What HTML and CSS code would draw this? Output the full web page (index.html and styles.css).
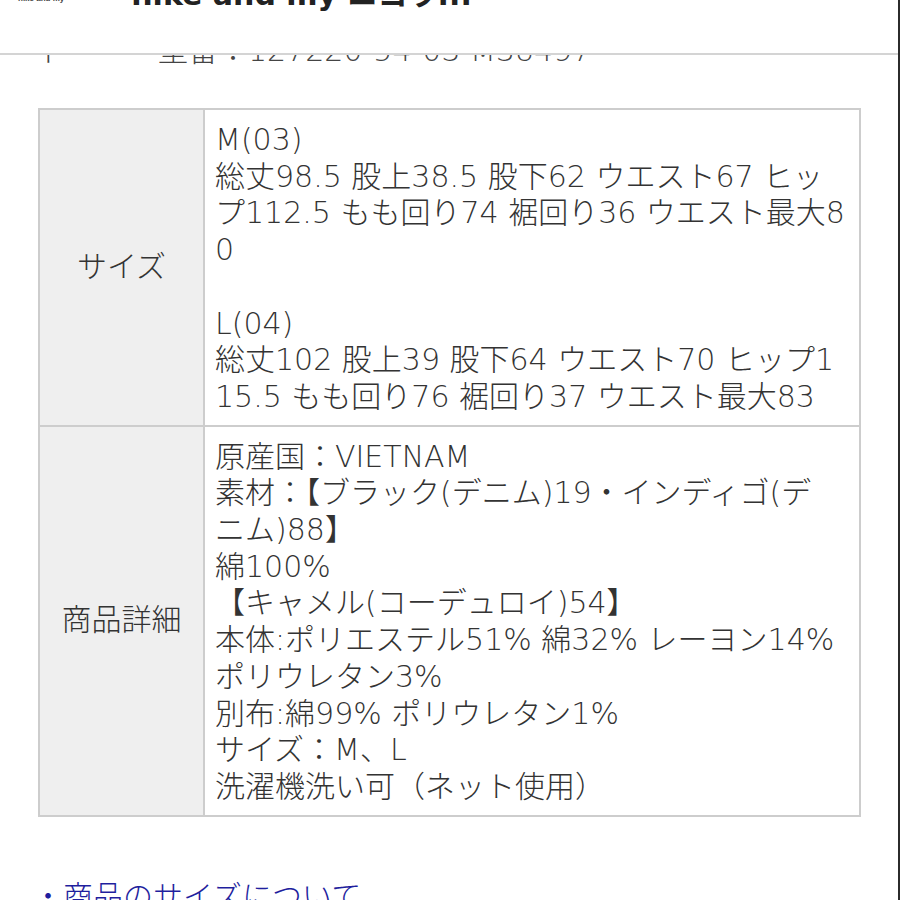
FILE: index.html
```html
<!DOCTYPE html>
<html lang="ja">
<head>
<meta charset="utf-8">
<link rel="stylesheet" href="styles.css">
</head>
<body>
<div class="page">
  <header class="header">
    <span class="logo">nike and my</span>
    <span class="title">nike and my ニコラ...</span>
  </header>
  <main class="content">
    <p class="code"><span class="code-key">ド</span><span>型番：127220-54-03 M38497</span></p>
    <table class="spec">
      <tr>
        <th>サイズ</th>
        <td>
          <span class="ln">M(03)</span>
          <span class="ln">総丈98.5 股上38.5 股下62 ウエスト67 ヒッ</span>
          <span class="ln">プ112.5 もも回り74 裾回り36 ウエスト最大8</span>
          <span class="ln">0</span>
          <span class="ln">&nbsp;</span>
          <span class="ln">L(04)</span>
          <span class="ln">総丈102 股上39 股下64 ウエスト70 ヒップ1</span>
          <span class="ln">15.5 もも回り76 裾回り37 ウエスト最大83</span>
        </td>
      </tr>
      <tr>
        <th>商品詳細</th>
        <td>
          <span class="ln">原産国：VIETNAM</span>
          <span class="ln">素材：【ブラック(デニム)19・インディゴ(デ</span>
          <span class="ln">ニム)88】</span>
          <span class="ln">綿100%</span>
          <span class="ln">【キャメル(コーデュロイ)54】</span>
          <span class="ln">本体:ポリエステル51% 綿32% レーヨン14%</span>
          <span class="ln">ポリウレタン3%</span>
          <span class="ln">別布:綿99% ポリウレタン1%</span>
          <span class="ln">サイズ：M、L</span>
          <span class="ln">洗濯機洗い可（ネット使用）</span>
        </td>
      </tr>
    </table>
    <p class="link">・商品のサイズについて</p>
  </main>
</div>
</body>
</html>
```
FILE: styles.css
```css
html, body {
  margin: 0;
  padding: 0;
  background: #fff;
}
body {
  font-family: "DejaVu Sans", "Noto Sans CJK JP", sans-serif;
  font-weight: 300;
  color: #333;
}
.page {
  position: relative;
  width: 898px;
  height: 900px;
  overflow: hidden;
  border-right: 2px solid #2b2b2b;
}
.header {
  position: absolute;
  top: 0;
  left: 0;
  right: 0;
  height: 53px;
  background: #fff;
  border-bottom: 2px solid #d4d4d4;
  z-index: 2;
  display: flex;
  align-items: flex-start;
}
.logo {
  font-family: "Liberation Sans", sans-serif;
  font-size: 8px;
  font-weight: 700;
  color: #444;
  margin: -5px 0 0 18px;
  line-height: 8px;
}
.title {
  font-size: 30px;
  font-weight: 700;
  color: #222;
  line-height: 30px;
  margin: -20px 0 0 67px;
}
.content {
  padding-top: 33px;
}
.code {
  margin: 0;
  font-size: 30px;
  line-height: 36px;
  color: #444;
  display: flex;
}
.code-key {
  width: 158px;
  padding-left: 38px;
  box-sizing: border-box;
}
.spec {
  margin: 39px 0 0 38px;
  width: 823px;
  border-collapse: collapse;
  border: 2px solid #cdcdcd;
  font-size: 30px;
  line-height: 36.7px;
}
.spec th,
.spec td {
  border: 2px solid #cdcdcd;
}
.spec th {
  width: 163px;
  background: #efefef;
  font-weight: 300;
  text-align: center;
  vertical-align: middle;
  padding: 0;
}
.spec td {
  padding: 12px 8px 9px 10px;
  vertical-align: top;
}
.ln {
  display: block;
  white-space: nowrap;
}
.link {
  margin: 62px 0 0 33px;
  font-size: 30px;
  line-height: 36px;
  color: #1f1f9e;
}
```
